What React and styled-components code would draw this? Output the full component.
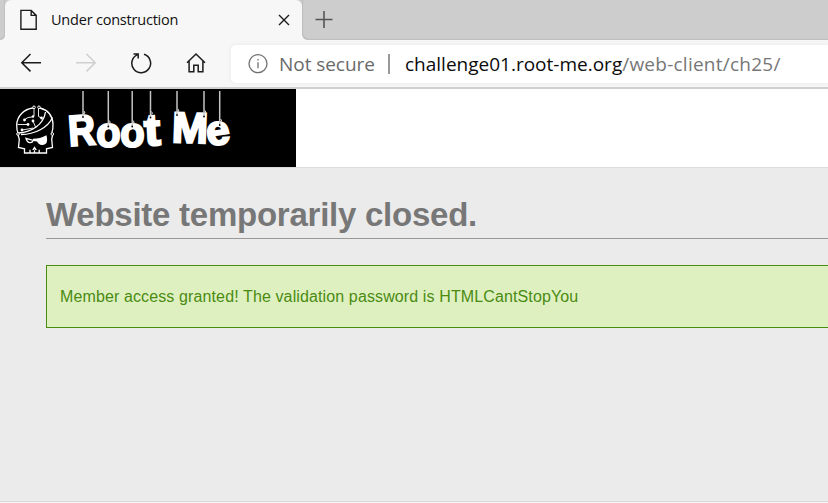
import React from "react";
import styled, { createGlobalStyle } from "styled-components";

const GlobalStyle = createGlobalStyle`
  *, *::before, *::after { box-sizing: border-box; }
  html, body { margin: 0; padding: 0; overflow: hidden; }
`;

const Browser = styled.div`
  display: flex;
  flex-direction: column;
  width: 100%;
  height: 503px;
  overflow: hidden;
  background: #f7f7f7;
  font-family: "Open Sans", "Noto Sans", sans-serif;
`;

const TabStrip = styled.div`
  display: flex;
  flex: none;
  height: 40px;
  background: #f7f7f7;
`;

const StripEdge = styled.div`
  width: 5px;
  background: #cdcdcd;
  border-bottom-right-radius: 5px;
  box-shadow: inset -1px -1px 1px #c0c0c0;
`;

const Tab = styled.div`
  display: flex;
  align-items: center;
  width: 297px;
  padding: 0 12px 0 15px;
  background: linear-gradient(#cdcdcd, #cdcdcd) 0 0 / 100% 8px no-repeat;
  position: relative;
  isolation: isolate;

  &::before {
    content: "";
    position: absolute;
    inset: 0;
    z-index: -1;
    background: #f7f7f7;
    border-radius: 6px 6px 0 0;
  }
`;

const TabTitle = styled.span`
  flex: 1;
  margin-left: 13px;
  font-size: 14.5px;
  line-height: 20px;
  letter-spacing: -0.21px;
  color: #111;
  white-space: nowrap;
`;

const StripRest = styled.div`
  display: flex;
  flex: 1;
  padding: 11px 0 0 13px;
  background: #cdcdcd;
  border-bottom-left-radius: 6px;
  box-shadow: inset 1px -1px 1px #bdbdbd;
`;

const Toolbar = styled.div`
  display: flex;
  flex: none;
  align-items: center;
  height: 49px;
  padding-left: 20px;
  border-bottom: 2px solid #cfcfcf;
  background: #f7f7f7;
`;

const NavButtons = styled.div`
  display: flex;
  flex: none;
  width: 211px;
  gap: 33px;
  margin-top: -1px;
`;

const AddressBar = styled.div`
  display: flex;
  flex: 1;
  align-items: center;
  height: 38px;
  margin-top: 1px;
  padding-left: 17px;
  border-radius: 5px 0 0 5px;
  background: #fff;
  box-shadow: 0 0 5px rgba(0, 0, 0, 0.07);
  font-size: 19px;
  line-height: 26px;
  white-space: nowrap;
`;

const SecurityLabel = styled.span`
  width: 109px;
  margin-left: 11px;
  color: #6a6a6a;
  letter-spacing: -0.05px;
`;

const Divider = styled.span`
  width: 2px;
  height: 20px;
  margin-right: 15px;
  background: #999;
`;

const Url = styled.span`
  color: #0b0b0b;
  letter-spacing: 0;
`;

const UrlPath = styled.span`
  color: #777;
  letter-spacing: 0.24px;
`;

const SiteHeader = styled.header`
  flex: none;
  height: 79px;
  border-bottom: 1px solid #dcdcdc;
  background: #fff;
`;

const Logo = styled.svg`
  display: block;
  width: 296px;
  height: 78px;
  background: #000;
`;

const LogoLetter = styled.text`
  font-family: "Liberation Sans", Arial, sans-serif;
  font-weight: 700;
  font-size: 43px;
  fill: #fff;
  stroke: #fff;
  stroke-width: 2.2px;
`;

const Page = styled.main`
  height: 334px;
  padding: 23px 0 0 46px;
  background: #ebebeb;
  border-bottom: 1px solid #d9d9d9;
  font-family: "Liberation Sans", Arial, sans-serif;
`;

const Title = styled.h1`
  height: 48px;
  margin: 0 0 26px;
  border-bottom: 1px solid #999;
  color: #777;
  font-size: 33px;
  line-height: 48px;
  letter-spacing: -0.25px;
  white-space: nowrap;
`;

const Notice = styled.p`
  height: 63px;
  margin: 0;
  padding-left: 13px;
  border: 1px solid #4a8b12;
  border-right: 0;
  background: #dff0c0;
  color: #4a8b12;
  font-size: 16px;
  line-height: 61px;
  letter-spacing: 0.12px;
  white-space: nowrap;
`;

const Icon = styled.svg`
  flex: none;
  fill: none;
  stroke: ${(p) => p.$color || "#1b1b1b"};
  stroke-width: ${(p) => p.$weight || 1.5};
`;

const LETTERS = [
  { char: "R", x: 69.2, y: 57, rotate: -4, scale: "0.87 1" },
  { char: "o", x: 96.3, y: 58, rotate: 0, scale: "0.93 1" },
  { char: "o", x: 120.3, y: 58, rotate: 0, scale: "0.93 1" },
  { char: "t", x: 145, y: 56.5, rotate: -3, scale: "1.12 1.04" },
  { char: "M", x: 171.5, y: 53, rotate: 2, scale: "1.01 1" },
  { char: "e", x: 208, y: 57, rotate: -8, scale: "0.98 0.97" },
];

const STRINGS = [
  { x: 83, end: 28 },
  { x: 108.3, end: 37.5 },
  { x: 132.2, end: 37.5 },
  { x: 150.5, end: 28.5 },
  { x: 177, end: 26 },
  { x: 204, end: 27.5 },
  { x: 219.7, end: 36 },
];

function Skull() {
  return (
    <g fill="none" stroke="#fff" strokeWidth="1.3">
      <path d="M33 19c-9 1-16 8-16.3 17 0 3 .3 6 1.3 8M40 19c8 2 12.5 8 13 16 .1 4-.4 7-1.2 9" />
      <path d="M18 46l1.3 4-.8 8.5 6 1.3V64h22v-4.2l6-1.3-.8-8.5 1-4" />
      <path d="M18.5 44c13-1 25-8 27-21M21 45.5c14 0 27-7 31.5-17" />
      <path d="M17.5 35.5H28M22 41l6-1 5-1M24 31l4-2.5 4-.5M33 32l2.5 6M34 19.5V27M38.5 20v7.5l3 1.5" strokeWidth="0.9" />
      <circle cx="34" cy="18.3" r="1.3" fill="#000" strokeWidth="1" />
      <circle cx="39" cy="18.3" r="1.3" fill="#000" strokeWidth="1" />
      <circle cx="18" cy="45" r="1.3" fill="#000" strokeWidth="1" />
      <circle cx="52.3" cy="45" r="1.3" fill="#000" strokeWidth="1" />
      <g fill="#fff" stroke="none">
        <circle cx="28" cy="35.5" r="1.4" />
        <circle cx="22" cy="41" r="1.4" />
        <circle cx="24.5" cy="31" r="1.4" />
        <circle cx="33" cy="32" r="1.4" />
        <circle cx="33" cy="27.5" r="1.3" />
        <circle cx="41.5" cy="29" r="1.4" />
        <path d="M33 49.8c5 0 9-1 13.5-3.5 1.3 6 .7 9-3.5 9.6-3 .4-4.5-.9-6-3.4l-4-.6z" />
        <path d="M34.5 57.2l-2.3 3.8h1.7l.6-1 .6 1h1.8z" />
      </g>
      <path d="M26 49.3l7.3 2.2c-1.5 3.2-6 3-7.3-2.2zM30 64v-3.3M34.5 64v-2.7M39.2 64v-3.3" />
    </g>
  );
}

export default function App() {
  return (
    <>
      <GlobalStyle />
      <Browser>
        <TabStrip>
          <StripEdge />
          <Tab>
            <Icon width="18" height="22" viewBox="0 0 18 22" $weight={1.4}>
              <path d="M.9 1.4h10.3l5 5v13.9H.9zM11.2 1.4v5h5" />
            </Icon>
            <TabTitle>Under construction</TabTitle>
            <Icon width="12" height="12" viewBox="0 0 12 12" $weight={1.4}>
              <path d="M1 1l10 10M11 1L1 11" />
            </Icon>
          </Tab>
          <StripRest>
            <Icon width="18" height="18" viewBox="0 0 18 18" $color="#555" $weight={1.6}>
              <path d="M.5 8.5h17M9 0v17" />
            </Icon>
          </StripRest>
        </TabStrip>

        <Toolbar>
          <NavButtons>
            <Icon width="22" height="22" viewBox="0 0 22 22">
              <path d="M21 10.7H2M10.5 2L1.8 10.7l8.7 8.7" />
            </Icon>
            <Icon width="22" height="22" viewBox="0 0 22 22" $color="#cfcfcf">
              <path d="M1 10.7h19M11.5 2l8.7 8.7-8.7 8.7" />
            </Icon>
            <Icon width="22" height="22" viewBox="0 0 22 22">
              <path d="M14 2.3A9.4 9.4 0 1 1 7.6 2.6M3.5 1.9h4.7v4.6" />
            </Icon>
            <Icon width="22" height="22" viewBox="0 0 22 22">
              <path d="M2 10.8L11 2l9 8.8M4.1 9v10.7h4.7v-6.4h4.4v6.4h4.7V9" />
            </Icon>
          </NavButtons>
          <AddressBar>
            <Icon width="20" height="20" viewBox="0 0 20 20" $color="#707070" $weight={1.3}>
              <circle cx="10" cy="9.7" r="9" />
              <path d="M10 8.2v6M10 5v1.6" />
            </Icon>
            <SecurityLabel>Not secure</SecurityLabel>
            <Divider />
            <Url>
              challenge01.root-me.org<UrlPath>/web-client/ch25/</UrlPath>
            </Url>
          </AddressBar>
        </Toolbar>

        <SiteHeader>
          <Logo viewBox="0 0 296 78" role="img" aria-label="Root Me">
            <Skull />
            {LETTERS.map((l, i) => (
              <LogoLetter
                key={i}
                transform={`translate(${l.x} ${l.y}) rotate(${l.rotate}) scale(${l.scale})`}
              >
                {l.char}
              </LogoLetter>
            ))}
            {STRINGS.map((s) => (
              <g key={s.x} fill="none">
                <path d={`M${s.x} 2V${s.end - 1}`} stroke="#c4c4c4" strokeWidth="1.5" />
                <path d={`M${s.x} ${s.end - 3}l2-1-1-2`} stroke="#ddd" />
                <circle cx={s.x} cy={s.end} r="0.9" fill="#000" />
              </g>
            ))}
          </Logo>
        </SiteHeader>

        <Page>
          <Title>Website temporarily closed.</Title>
          <Notice>Member access granted! The validation password is HTMLCantStopYou</Notice>
        </Page>
      </Browser>
    </>
  );
}
